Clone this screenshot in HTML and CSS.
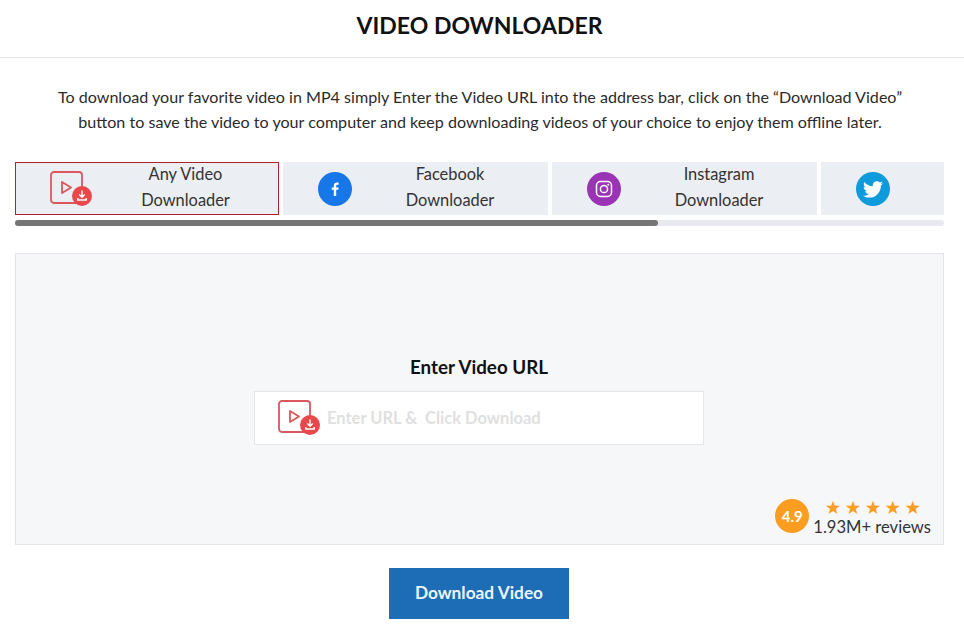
FILE: index.html
```html
<!DOCTYPE html>
<html lang="en">
<head>
    <meta charset="UTF-8">
    <title>Video Downloader</title>
    <link rel="stylesheet" href="styles.css">
</head>
<body>
    <svg class="defs" width="0" height="0">
        <symbol id="video-dl" viewBox="0 0 43 36">
            <rect x="1" y="1" width="31" height="31" rx="3" fill="none" stroke="#d9585c" stroke-width="1.8"/>
            <path d="M12 11 L21 16.5 L12 22 Z" fill="none" stroke="#d9585c" stroke-width="1.8" stroke-linejoin="round"/>
            <circle cx="32" cy="25" r="10" fill="#e8474c"/>
            <path d="M32 19.5 V26 M29.3 23.5 L32 26.2 L34.7 23.5 M27.8 27 V29 H36.2 V27" fill="none" stroke="#fff" stroke-width="1.4"/>
        </symbol>
    </svg>

    <div class="header">VIDEO DOWNLOADER</div>

    <p class="intro">To download your favorite video in MP4 simply Enter the Video URL into the address bar, click on the “Download Video”<br>button to save the video to your computer and keep downloading videos of your choice to enjoy them offline later.</p>

    <div class="tabs">
        <div class="tab active">
            <svg class="tab-icon video"><use href="#video-dl"/></svg>
            <div class="tab-text">Any Video<br>Downloader</div>
        </div>
        <div class="tab">
            <svg class="tab-icon" viewBox="0 0 34 34">
                <circle cx="17" cy="17" r="17" fill="#1877e8"/>
                <path d="M18.2 24 V17.8 H20.3 L20.6 15.4 H18.2 V13.9 C18.2 13.2 18.5 12.7 19.4 12.7 H20.7 V10.6 C20.4 10.5 19.7 10.5 18.9 10.5 C17.1 10.5 15.8 11.6 15.8 13.6 V15.4 H13.7 V17.8 H15.8 V24 Z" fill="#fff"/>
            </svg>
            <div class="tab-text">Facebook<br>Downloader</div>
        </div>
        <div class="tab">
            <svg class="tab-icon" viewBox="0 0 34 34">
                <circle cx="17" cy="17" r="17" fill="#9a34b4"/>
                <rect x="9.5" y="9.5" width="15" height="15" rx="4" fill="none" stroke="#fff" stroke-width="1.5"/>
                <circle cx="17" cy="17" r="3.6" fill="none" stroke="#fff" stroke-width="1.5"/>
                <circle cx="21.3" cy="12.7" r="1" fill="#fff"/>
            </svg>
            <div class="tab-text">Instagram<br>Downloader</div>
        </div>
        <div class="tab">
            <svg class="tab-icon" viewBox="0 0 34 34">
                <circle cx="17" cy="17" r="17" fill="#0d9bdc"/>
                <path d="M27 11.2 C26.2 11.6 25.4 11.8 24.6 11.9 C25.5 11.4 26.1 10.6 26.4 9.6 C25.6 10.1 24.7 10.4 23.8 10.6 C23 9.8 22 9.3 20.8 9.3 C18.5 9.3 16.7 11.2 16.7 13.4 C16.7 13.7 16.7 14 16.8 14.3 C13.4 14.1 10.3 12.5 8.3 10 C8 10.6 7.8 11.3 7.8 12.1 C7.8 13.5 8.5 14.8 9.6 15.5 C8.9 15.5 8.3 15.3 7.7 15 V15.1 C7.7 17.1 9.1 18.7 11 19.1 C10.4 19.3 9.8 19.3 9.1 19.2 C9.6 20.8 11.1 22 12.9 22 C11.5 23.1 9.8 23.8 7.9 23.8 C7.6 23.8 7.3 23.8 7 23.7 C8.8 24.9 11 25.6 13.3 25.6 C20.8 25.6 24.9 19.3 24.9 13.9 V13.4 C25.7 12.8 26.4 12.1 27 11.2 Z" fill="#fff"/>
            </svg>
        </div>
    </div>
    <div class="scroll-track"><div class="scroll-thumb"></div></div>

    <div class="panel">
        <div class="panel-label">Enter Video URL</div>
        <div class="url-box">
            <svg class="url-icon"><use href="#video-dl"/></svg>
            <span class="url-placeholder">Enter URL &amp;&nbsp; Click Download</span>
        </div>
        <div class="rating">
            <div class="score">4.9</div>
            <div class="rating-info">
                <div class="stars">★★★★★</div>
                <div class="reviews">1.93M+ reviews</div>
            </div>
        </div>
    </div>

    <div class="actions">
        <div class="download-btn">Download Video</div>
    </div>
</body>
</html>
```

FILE: styles.css
```css
* {
    box-sizing: border-box;
}

body {
    margin: 0;
    height: 624px;
    overflow: hidden;
    background-color: #fff;
    color: #222;
    font-family: Lato, "Noto Sans", sans-serif;
}

.defs {
    display: block;
    height: 0;
}

.header {
    height: 58px;
    padding-right: 5px;
    border-bottom: 1px solid #e6e6e6;
    text-align: center;
    line-height: 51px;
    font-size: 23px;
    font-weight: 700;
    color: #111;
}

.intro {
    margin: 26px 0 0;
    padding-right: 4px;
    text-align: center;
    font-size: 16.1px;
    line-height: 25px;
    color: #2b2b2b;
}

.tabs {
    display: flex;
    gap: 4px;
    margin: 28px 20px 0 15px;
    overflow: hidden;
}

.tab {
    display: flex;
    align-items: center;
    flex: 0 0 265px;
    height: 53px;
    padding-left: 35px;
    background-color: #ebeef3;
}

.tab:last-child {
    flex-basis: 123px;
}

.tab.active {
    flex-basis: 264px;
    padding-left: 34px;
    border: 1px solid #b3202a;
}

.tab-icon {
    flex: none;
    width: 34px;
    height: 34px;
}

.tab-icon.video {
    width: 43px;
    height: 36px;
}

.tab-text {
    flex: 1;
    padding-bottom: 3px;
    text-align: center;
    font-size: 16.4px;
    line-height: 26px;
    color: #333;
}

.scroll-track {
    height: 6px;
    margin: 5px 20px 0 15px;
    border-radius: 3px;
    background-color: #e8e9ee;
}

.scroll-thumb {
    width: 643px;
    height: 6px;
    border-radius: 3px;
    background-color: #757575;
}

.panel {
    position: relative;
    display: flex;
    flex-direction: column;
    align-items: center;
    height: 292px;
    margin: 27px 20px 0 15px;
    padding: 100px 1px 0 0;
    border: 1px solid #e2e4e8;
    background-color: #f6f7f9;
}

.panel-label {
    font-size: 18.8px;
    font-weight: 700;
    line-height: 26px;
    color: #111;
}

.url-box {
    display: flex;
    align-items: center;
    gap: 6px;
    width: 450px;
    height: 54px;
    margin-top: 11px;
    padding-left: 23px;
    border: 1px solid #e4e6ea;
    background-color: #fff;
}

.url-icon {
    flex: none;
    width: 43px;
    height: 36px;
}

.url-placeholder {
    font-size: 16.5px;
    font-weight: 700;
    color: #e0e0e0;
}

.rating {
    position: absolute;
    right: 12px;
    bottom: 7px;
    display: flex;
    align-items: flex-start;
    gap: 4px;
}

.score {
    width: 34px;
    height: 34px;
    margin-top: 1px;
    border-radius: 50%;
    background-color: #fb9d20;
    color: #fff;
    text-align: center;
    line-height: 34px;
    font-size: 15px;
    font-weight: 700;
}

.rating-info {
    text-align: center;
}

.stars {
    color: #fb9d20;
    font-family: "DejaVu Sans", sans-serif;
    font-size: 18.5px;
    line-height: 20px;
    letter-spacing: 3.4px;
    padding-left: 5px;
}

.reviews {
    font-size: 16.6px;
    line-height: 19px;
    color: #333;
}

.actions {
    display: flex;
    justify-content: center;
    margin: 23px 21px 0 15px;
}

.download-btn {
    width: 180px;
    height: 51px;
    background-color: #1c6cb6;
    color: #eaf4fb;
    text-align: center;
    line-height: 50px;
    font-size: 17.3px;
    font-weight: 700;
}
```
